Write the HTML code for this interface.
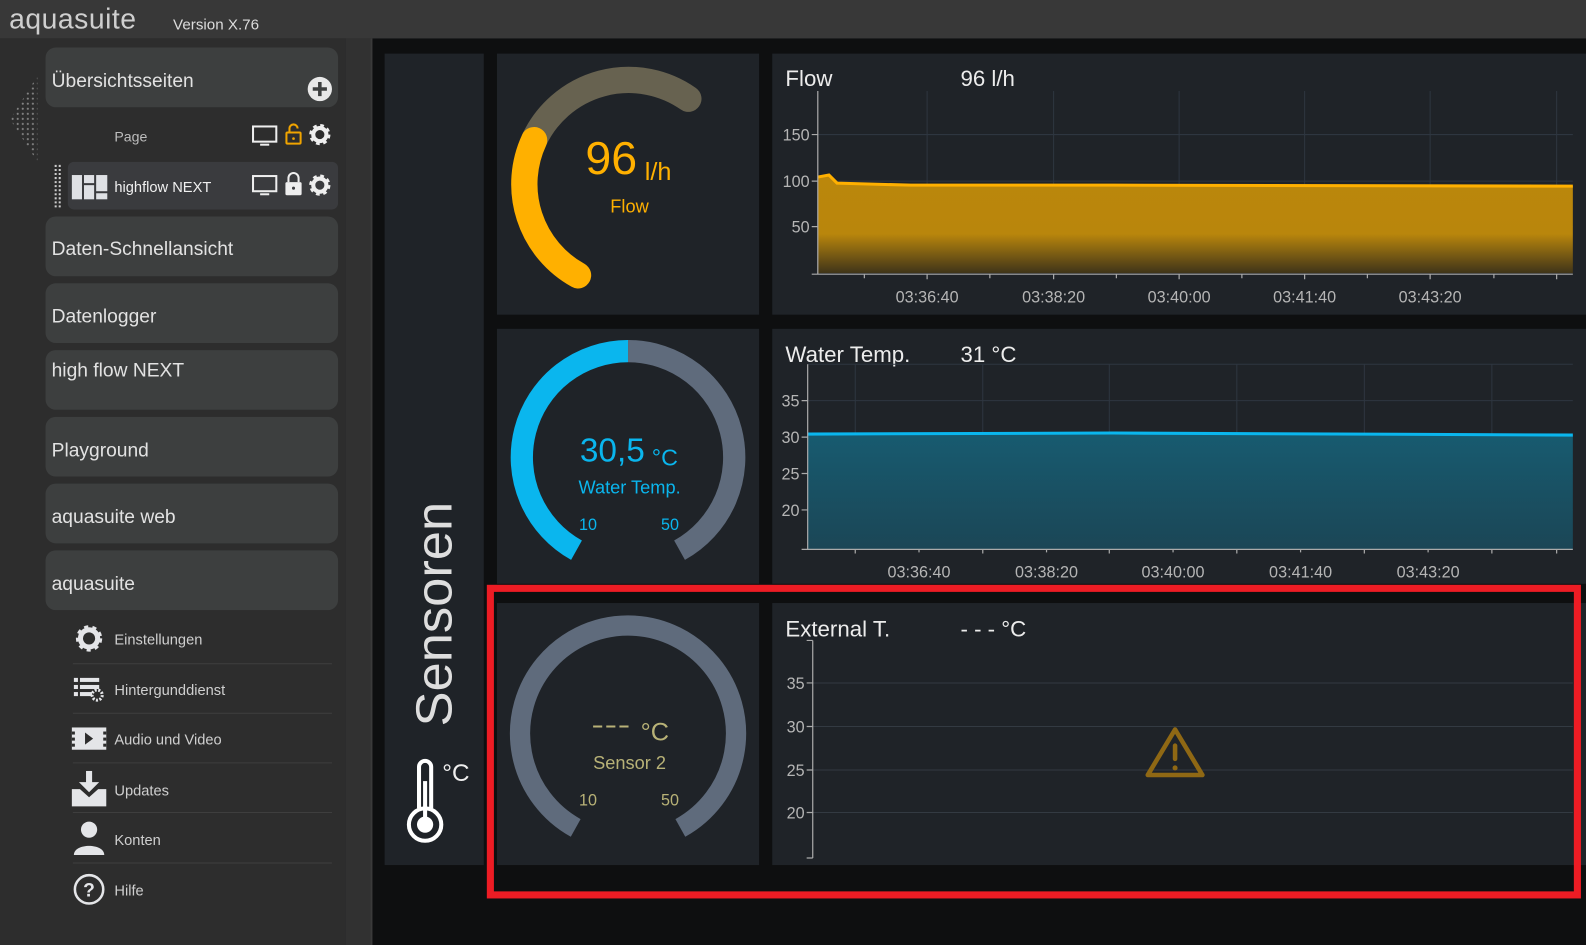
<!DOCTYPE html>
<html><head><meta charset="utf-8"><style>
html,body{margin:0;padding:0;background:#0e0f10;overflow:hidden}
svg{display:block}
text{font-family:"Liberation Sans","DejaVu Sans",sans-serif}
</style></head><body>
<svg width="1586" height="945" viewBox="0 0 1567 934" preserveAspectRatio="none" xmlns="http://www.w3.org/2000/svg">
<defs>
<linearGradient id="gf" x1="0" y1="0" x2="0" y2="1">
<stop offset="0" stop-color="#bb870c"/><stop offset="0.6" stop-color="#b9860c"/><stop offset="1" stop-color="#3f3419"/></linearGradient>
<linearGradient id="gw" x1="0" y1="0" x2="0" y2="1">
<stop offset="0" stop-color="#175b70"/><stop offset="1" stop-color="#1b4656"/></linearGradient>
<pattern id="dots" width="5" height="5" patternUnits="userSpaceOnUse"><circle cx="2.5" cy="2.5" r="1" fill="#888"/></pattern>
</defs>
<rect width="1567" height="934" fill="#0e0f10"/>
<!-- header -->
<rect x="0" y="0" width="1567" height="38" fill="#383838"/>
<text x="9" y="28" font-size="28" fill="#cfcfcf" letter-spacing="0.5">aquasuite</text>
<text x="171" y="29" font-size="15" fill="#dcdcdc">Version X.76</text>
<!-- sidebar -->
<rect x="0" y="38" width="341" height="896" fill="#2d2d2d"/>
<rect x="341" y="38" width="25" height="896" fill="#313131"/>
<rect x="366" y="38" width="2" height="896" fill="#3a3a3a"/>
<path d="M37 75 L37 160 L10 118 Z" fill="url(#dots)"/>
<rect x="45" y="47" width="289" height="59" rx="10" fill="#3d3f3f"/>
<text x="51" y="86" font-size="19" fill="#e2e2e2">Übersichtsseiten</text>
<circle cx="316" cy="88" r="12" fill="#e8e8e8"/>
<path d="M316 81v14M309 88h14" stroke="#3d3f3f" stroke-width="3.5"/>
<text x="113" y="140" font-size="14" fill="#bdbdbd">Page</text>
<g fill="none" stroke="#eee" stroke-width="2"><rect x="250" y="125" width="23" height="15"/></g>
<path d="M257 143h9" stroke="#eee" stroke-width="2"/>
<rect x="283" y="131" width="14" height="11" rx="1" fill="none" stroke="#f0a400" stroke-width="2"/>
<path d="M286 131v-4a4 4 0 0 1 8 0" fill="none" stroke="#f0a400" stroke-width="2"/>
<circle cx="290" cy="137" r="1.3" fill="#f0a400"/>
<g id="gear"><circle cx="316" cy="133" r="8" fill="none" stroke="#eee" stroke-width="5" stroke-dasharray="3.2 3.1"/><circle cx="316" cy="133" r="6.5" fill="none" stroke="#eee" stroke-width="4"/></g>
<rect x="67" y="160" width="267" height="47" rx="6" fill="#3a3b3e"/>
<path d="M55 163v44" stroke="#ccc" stroke-width="2" stroke-dasharray="2 2"/>
<path d="M59 163v44" stroke="#ccc" stroke-width="2" stroke-dasharray="2 2"/>
<rect x="71" y="173" width="10" height="24" fill="#dfe1e5"/><rect x="83" y="173" width="10" height="8" fill="#dfe1e5"/><rect x="83" y="183" width="10" height="14" fill="#dfe1e5"/><rect x="95" y="173" width="11" height="16" fill="#dfe1e5"/><rect x="95" y="191" width="11" height="6" fill="#dfe1e5"/>
<text x="113" y="190" font-size="14.5" fill="#f0f0f0">highflow NEXT</text>
<rect x="250" y="174" width="23" height="15" fill="none" stroke="#eee" stroke-width="2"/>
<path d="M257 192h9" stroke="#eee" stroke-width="2"/>
<rect x="282" y="180" width="16" height="13" rx="1.5" fill="#eee"/>
<path d="M285 180v-4a5 5 0 0 1 10 0v4" fill="none" stroke="#eee" stroke-width="2"/>
<circle cx="290" cy="186" r="1.5" fill="#3a3b3e"/>
<use href="#gear" transform="translate(0,50)"/>
<g fill="#3d3f3f">
<rect x="45" y="214" width="289" height="59" rx="10"/>
<rect x="45" y="280" width="289" height="59" rx="10"/>
<rect x="45" y="346" width="289" height="59" rx="10"/>
<rect x="45" y="412" width="289" height="59" rx="10"/>
<rect x="45" y="478" width="289" height="59" rx="10"/>
<rect x="45" y="544" width="289" height="59" rx="10"/>
</g>
<g font-size="19" fill="#e2e2e2">
<text x="51" y="252">Daten-Schnellansicht</text>
<text x="51" y="319">Datenlogger</text>
<text x="51" y="372">high flow NEXT</text>
<text x="51" y="451">Playground</text>
<text x="51" y="517">aquasuite web</text>
<text x="51" y="583">aquasuite</text>
</g>
<g stroke="#3e3e3e" stroke-width="1" fill="none"><path d="M72 656h256M72 705h256M72 754h256M72 803h256M72 853h256"/></g>
<g font-size="14.5" fill="#cfcfcf">
<text x="113" y="637">Einstellungen</text>
<text x="113" y="687">Hintergunddienst</text>
<text x="113" y="736">Audio und Video</text>
<text x="113" y="786">Updates</text>
<text x="113" y="835">Konten</text>
<text x="113" y="885">Hilfe</text>
</g>
<g fill="#e4e5e8">
<circle cx="88" cy="631" r="10" fill="none" stroke="#e4e5e8" stroke-width="6" stroke-dasharray="3.5 3.6"/>
<circle cx="88" cy="631" r="8.5" fill="none" stroke="#e4e5e8" stroke-width="5"/>
<rect x="73" y="670" width="4" height="4"/><rect x="79" y="670" width="19" height="4"/>
<rect x="73" y="677" width="4" height="4"/><rect x="79" y="677" width="19" height="4"/>
<rect x="73" y="684" width="4" height="4"/><rect x="79" y="684" width="12" height="4"/>
<circle cx="96" cy="687" r="5" fill="none" stroke="#e4e5e8" stroke-width="3" stroke-dasharray="2 1.5"/>
<rect x="71" y="719" width="34" height="22"/>
<path d="M84 724l8 6-8 6z" fill="#2d2d2d"/>
<g fill="#2d2d2d"><rect x="71" y="723" width="3" height="3"/><rect x="71" y="729" width="3" height="3"/><rect x="71" y="735" width="3" height="3"/><rect x="102" y="723" width="3" height="3"/><rect x="102" y="729" width="3" height="3"/><rect x="102" y="735" width="3" height="3"/></g>
<rect x="85" y="762" width="6" height="12"/><path d="M78 773h20l-10 10z"/>
<path d="M71 780h8l9 8 9-8h8v17h-34z"/>
<circle cx="88" cy="820" r="8"/><path d="M73 845c0-12 30-12 30 0z"/>
<circle cx="88" cy="879" r="14" fill="none" stroke="#e4e5e8" stroke-width="2.5"/>
</g>
<text x="88" y="886" font-size="19" font-weight="bold" fill="#e4e5e8" text-anchor="middle">?</text>
<!-- main panels -->
<g fill="#1f2328">
<rect x="380" y="53" width="98" height="802"/>
<rect x="491" y="53" width="259" height="258"/>
<rect x="491" y="325" width="259" height="252"/>
<rect x="491" y="596" width="259" height="259"/>
<rect x="763" y="53" width="804" height="258"/>
<rect x="763" y="325" width="804" height="252"/>
<rect x="763" y="596" width="804" height="259"/>
</g>
<!-- Sensoren -->
<text transform="translate(446,718) rotate(-90)" font-size="50" fill="#dedede" textLength="222" lengthAdjust="spacingAndGlyphs">Sensoren</text>
<path d="M414 799V758a6 6 0 0 1 12 0V799" fill="none" stroke="#fff" stroke-width="4"/>
<circle cx="420" cy="815" r="16" fill="none" stroke="#fff" stroke-width="4"/>
<circle cx="420" cy="815" r="8" fill="#fff"/><rect x="418" y="772" width="4" height="40" fill="#fff"/>
<text x="437" y="772" font-size="24" fill="#eee">°C</text>
<!-- flow gauge -->
<path d="M527.7 138.5 A103 103 0 0 1 680.1 97.6" fill="none" stroke="#676250" stroke-width="26" stroke-linecap="round"/>
<path d="M571.1 272.1 A103 103 0 0 1 527.7 138.5" fill="none" stroke="#ffb000" stroke-width="26" stroke-linecap="round"/>
<text x="604" y="172" font-size="46" fill="#ffb000" text-anchor="middle">96</text>
<text x="637" y="178" font-size="25" fill="#ffb000">l/h</text>
<text x="622" y="210" font-size="18" fill="#ffb000" text-anchor="middle">Flow</text>
<!-- water gauge -->
<path d="M620.5 347 A105 105 0 0 1 671.4 543.8" fill="none" stroke="#5f6b7c" stroke-width="22"/>
<path d="M569.6 543.8 A105 105 0 0 1 620.5 347" fill="none" stroke="#0ab6ee" stroke-width="22"/>
<text x="605" y="456" font-size="33" fill="#0ab6ee" text-anchor="middle">30,5</text>
<text x="644" y="460" font-size="23" fill="#0ab6ee">°C</text>
<text x="622" y="488" font-size="18" fill="#0ab6ee" text-anchor="middle">Water Temp.</text>
<text x="581" y="524" font-size="16" fill="#0ab6ee" text-anchor="middle">10</text>
<text x="662" y="524" font-size="16" fill="#0ab6ee" text-anchor="middle">50</text>
<!-- sensor2 gauge -->
<path d="M568.8 818.3 A106.7 106.7 0 1 1 672.2 818.3" fill="none" stroke="#5f6b7c" stroke-width="20"/>
<path d="M586 718h9M599 718h9M612 718h9" stroke="#b8b277" stroke-width="2"/>
<text x="633" y="732" font-size="25" fill="#b8b277">°C</text>
<text x="622" y="760" font-size="18" fill="#b8b277" text-anchor="middle">Sensor 2</text>
<text x="581" y="796" font-size="16" fill="#b8b277" text-anchor="middle">10</text>
<text x="662" y="796" font-size="16" fill="#b8b277" text-anchor="middle">50</text>
<!-- Flow chart -->
<text x="776" y="85" font-size="22" fill="#ececec">Flow</text>
<text x="949" y="85" font-size="22" fill="#ececec">96 l/h</text>
<g stroke="#2e3640" stroke-width="1" fill="none"><path d="M808 133H1554M808 179H1554M808 224H1554M916 90V270M1041 90V270M1165 90V270M1289 90V270M1413 90V270M1538 90V270"/></g>
<path d="M808 175L819 173L827 181L900 183L1100 183L1554 184V270H808Z" fill="url(#gf)"/>
<path d="M808 175L819 173L827 181L900 183L1100 183L1554 184" fill="none" stroke="#ffb000" stroke-width="3"/>
<g stroke="#aaa" stroke-width="1.2" fill="none"><path d="M808 90V271H1554M802 133h6M802 179h6M802 224h6M802 271h6M854 271v4M916 271v5M978 271v4M1041 271v5M1103 271v4M1165 271v5M1227 271v4M1289 271v5M1351 271v4M1413 271v5M1476 271v4M1538 271v5"/></g>
<g font-size="16" fill="#b5b5b5">
<text x="800" y="139" text-anchor="end">150</text><text x="800" y="185" text-anchor="end">100</text><text x="800" y="230" text-anchor="end">50</text>
<text x="916" y="299" text-anchor="middle">03:36:40</text><text x="1041" y="299" text-anchor="middle">03:38:20</text><text x="1165" y="299" text-anchor="middle">03:40:00</text><text x="1289" y="299" text-anchor="middle">03:41:40</text><text x="1413" y="299" text-anchor="middle">03:43:20</text>
</g>
<!-- Water chart -->
<text x="776" y="358" font-size="22" fill="#ececec">Water Temp.</text>
<text x="949" y="358" font-size="22" fill="#ececec">31 °C</text>
<g stroke="#2e3640" stroke-width="1" fill="none"><path d="M798 360H1554M798 396H1554M798 432H1554M798 468H1554M798 504H1554M845 360V543M971 360V543M1096 360V543M1222 360V543M1348 360V543M1474 360V543"/></g>
<path d="M798 429L1100 428L1554 430V543H798Z" fill="url(#gw)"/>
<path d="M798 429L1100 428L1554 430" fill="none" stroke="#0ab6ee" stroke-width="3"/>
<g stroke="#aaa" stroke-width="1.2" fill="none"><path d="M798 360V543H1554M792 396h6M792 432h6M792 468h6M792 504h6M792 543h6M845 543v4M908 543v3M971 543v4M1034 543v3M1096 543v4M1159 543v3M1222 543v4M1285 543v3M1348 543v4M1411 543v3M1474 543v4M1538 543v4"/></g>
<g font-size="16" fill="#b5b5b5">
<text x="790" y="402" text-anchor="end">35</text><text x="790" y="438" text-anchor="end">30</text><text x="790" y="474" text-anchor="end">25</text><text x="790" y="510" text-anchor="end">20</text>
<text x="908" y="571" text-anchor="middle">03:36:40</text><text x="1034" y="571" text-anchor="middle">03:38:20</text><text x="1159" y="571" text-anchor="middle">03:40:00</text><text x="1285" y="571" text-anchor="middle">03:41:40</text><text x="1411" y="571" text-anchor="middle">03:43:20</text>
</g>
<!-- External chart -->
<text x="776" y="629" font-size="22" fill="#ececec">External T.</text>
<text x="949" y="629" font-size="22" fill="#ececec">- - - °C</text>
<g stroke="#333a42" stroke-width="1" fill="none"><path d="M803 675H1554M803 718H1554M803 761H1554M803 803H1554"/></g>
<g stroke="#aaa" stroke-width="1.2" fill="none"><path d="M803 633V848M797 633h6M797 675h6M797 718h6M797 761h6M797 803h6M797 848h6"/></g>
<g font-size="16" fill="#b5b5b5">
<text x="795" y="681" text-anchor="end">35</text><text x="795" y="724" text-anchor="end">30</text><text x="795" y="767" text-anchor="end">25</text><text x="795" y="809" text-anchor="end">20</text>
</g>
<path d="M1161 721L1188 766H1134Z" fill="none" stroke="#8f6814" stroke-width="4.5" stroke-linejoin="round"/>
<path d="M1161 737v13" stroke="#8f6814" stroke-width="4.5" stroke-linecap="round"/>
<circle cx="1161" cy="759" r="2.5" fill="#8f6814"/>
<!-- red highlight -->
<rect x="484.5" y="581.5" width="1074" height="303" fill="none" stroke="#ed1c24" stroke-width="7"/>
</svg>
</body></html>
